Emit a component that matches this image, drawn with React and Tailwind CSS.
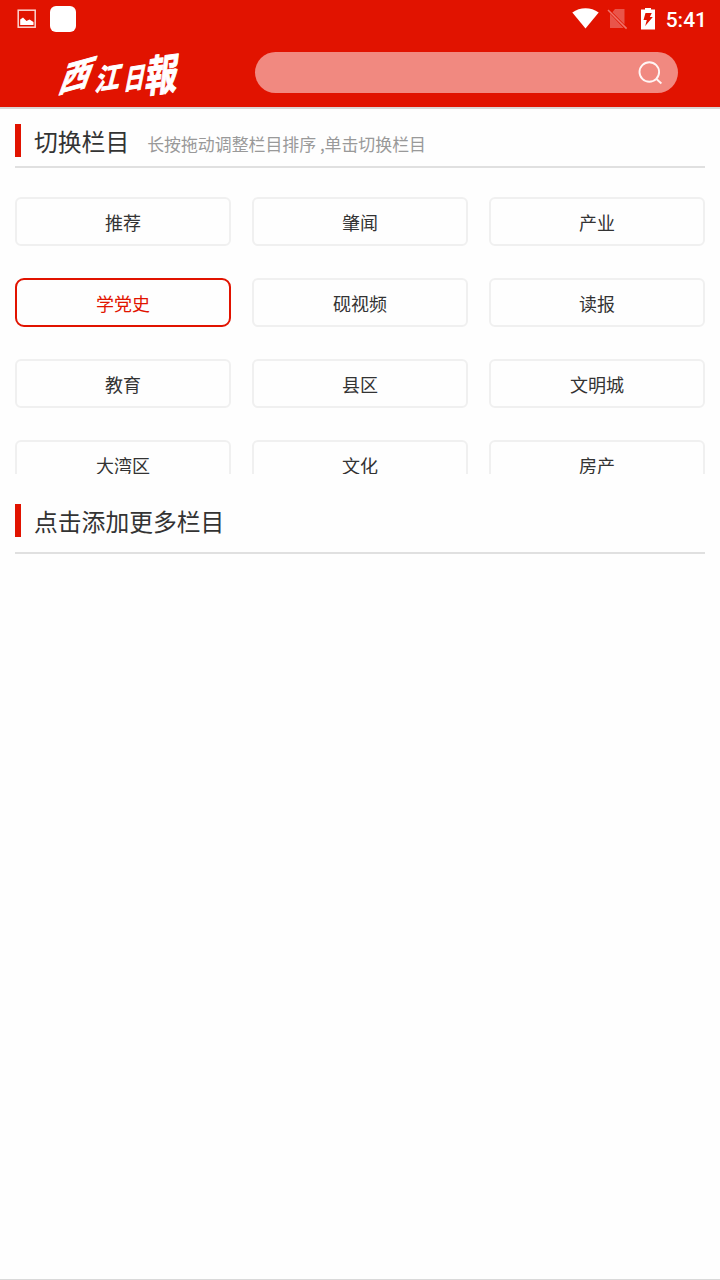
import React, { useState } from 'react';

const channels = [
  '推荐', '肇闻', '产业',
  '学党史', '砚视频', '读报',
  '教育', '县区', '文明城',
  '大湾区', '文化', '房产',
];

function StatusBar() {
  return (
    <div className="flex h-[38px] items-center justify-between pl-[17px] pr-[13px] text-white">
      <div className="flex items-center gap-[13px]">
        <svg className="h-5 w-5" viewBox="0 0 20 20" fill="none">
          <rect x="1.2" y="1.2" width="17" height="17" stroke="#fbd5d0" strokeWidth="1.5" />
          <path d="M3.2 16V10.5L6 8.6L9.5 12L12.5 10.5L16.5 13V16Z" fill="white" />
        </svg>
        <div className="h-[26px] w-[26px] rounded-md bg-white" />
      </div>

      <div className="flex items-center">
        <svg className="h-[22px] w-[27px]" viewBox="0 0 27 22">
          <path d="M0.3 4.5C8 -1.3 19 -1.3 26.7 4.5L13.5 20.5Z" fill="white" />
        </svg>
        <svg className="ml-2 h-[22px] w-[21px]" viewBox="0 0 21 22">
          <path d="M8 1H17.5V16.6L5.4 4.2ZM3 5.8L16.6 20H3Z" fill="#e9554a" />
          <path d="M1 2L19.6 20.6" stroke="#f0756c" strokeWidth="1.5" />
        </svg>
        <svg className="ml-3 h-[22px] w-[16px]" viewBox="0 0 16 22">
          <path d="M5 -0.5H11V1.5H15V21.5H1V1.5H5Z" fill="white" />
          <path d="M5.5 5H11.8L9.8 9H12.8L5.2 18L6.8 12H3.5Z" fill="#e11300" />
        </svg>
        <span className="ml-[10px] mt-[2px] font-['Roboto',sans-serif] text-[21px] font-medium leading-6">5:41</span>
      </div>
    </div>
  );
}

function Masthead() {
  return (
    <svg className="h-[56px] w-[135px] overflow-visible" viewBox="0 0 135 56" fill="white" stroke="white" strokeWidth="0.9" strokeLinejoin="round" fontFamily="'Noto Sans CJK TC', sans-serif" fontWeight="700">
      <text transform="matrix(0.95 -0.26 -0.4 1.1 7 47)" fontSize="33">西</text>
      <text transform="matrix(0.95 -0.16 -0.3 1.15 44 45)" fontSize="26">江</text>
      <text transform="matrix(0.8 -0.12 -0.22 1.1 73 44)" fontSize="26">日</text>
      <text transform="matrix(0.88 -0.12 -0.15 1.18 94 47)" fontSize="37">報</text>
    </svg>
  );
}

function SectionTitle({ title, hint }) {
  return (
    <div className="flex h-[33px] items-center">
      <div className="h-[33px] w-[6px] bg-[#e11300]" />
      <h2 className="-mt-px ml-[13px] text-[23.8px] leading-[33px] text-[#333]">{title}</h2>
      {hint && <span className="ml-[18px] mt-[5px] text-[16.9px] leading-[25px] text-[#999]">{hint}</span>}
    </div>
  );
}

export default function App() {
  const [active, setActive] = useState('学党史');

  return (
    <div className="flex h-[1280px] w-[720px] flex-col overflow-hidden border-b border-[#d9d9d9] bg-[#fefefe] font-['Noto_Sans_CJK_SC',sans-serif]">
      <header className="h-[109px] shrink-0 border-b-2 border-[#d9d5d5] bg-[#e11300]">
        <StatusBar />
        <div className="flex pl-[50px] pt-2">
          <Masthead />
          <div className="ml-[70px] mt-[6px] flex h-[41px] w-[423px] items-center justify-end rounded-full bg-[#f18980] pr-[14px]">
            <svg className="h-[26px] w-[26px]" viewBox="0 0 26 26" fill="none" stroke="#fff5f4" strokeWidth="1.9">
              <circle cx="11.3" cy="12" r="9.8" />
              <path d="M18.2 18.8L23.4 23.5" />
            </svg>
          </div>
        </div>
      </header>

      <main className="px-[15px] pt-[15px]">
        <section>
          <SectionTitle title="切换栏目" hint="长按拖动调整栏目排序 ,单击切换栏目" />
          <div className="mt-[9px] h-[2px] bg-[#e0e0e0]" />
          <div className="mt-[29px] grid h-[277px] auto-rows-[49px] grid-cols-3 gap-x-[21px] gap-y-8 overflow-hidden">
            {channels.map((name) => (
              <button
                key={name}
                onClick={() => setActive(name)}
                className={
                  name === active
                    ? 'rounded-[9px] border-2 border-[#e11300] text-[18px] leading-6 text-[#e11300]'
                    : 'rounded-md border-2 border-[#f0f0f0] text-[18px] leading-6 text-[#333]'
                }
              >
                {name}
              </button>
            ))}
          </div>
        </section>

        <section className="mt-[30px]">
          <SectionTitle title="点击添加更多栏目" />
          <div className="mt-[15px] h-[2px] bg-[#e0e0e0]" />
        </section>
      </main>
    </div>
  );
}
